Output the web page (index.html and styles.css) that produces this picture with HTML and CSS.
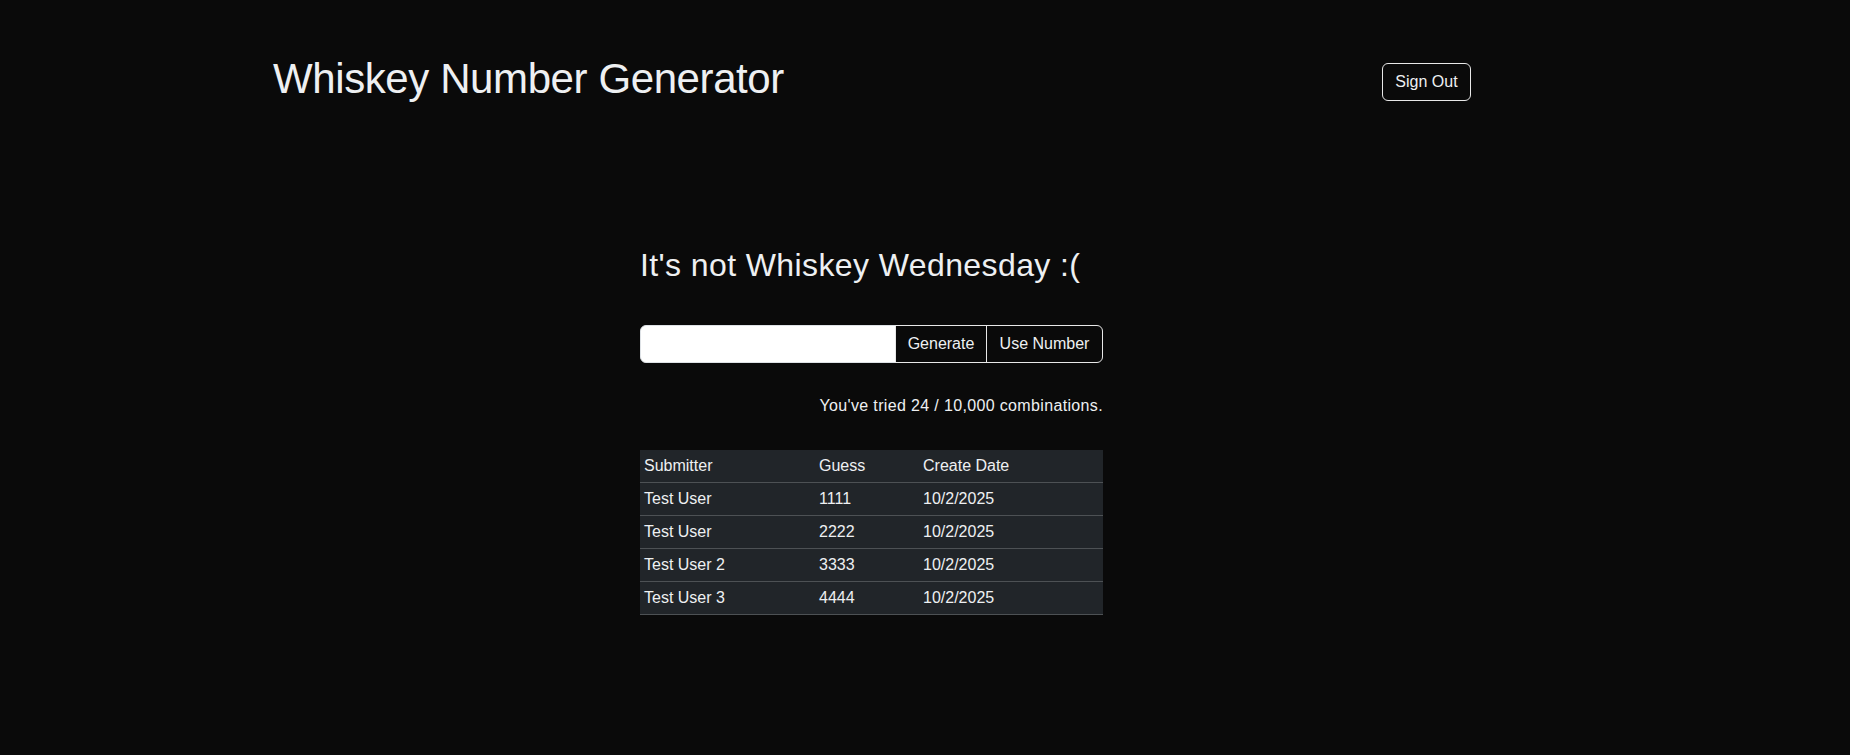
FILE: index.html
```html
<!DOCTYPE html>
<html lang="en">
<head>
<meta charset="utf-8">
<title>Whiskey Number Generator</title>
<link rel="stylesheet" href="styles.css">
</head>
<body>
<header class="topbar">
  <h1 class="title">Whiskey Number Generator</h1>
  <button class="btn btn-outline">Sign Out</button>
</header>
<main class="content">
  <h2 class="status">It's not Whiskey Wednesday :(</h2>
  <div class="input-group">
    <input class="number-input" type="text" aria-label="Number">
    <button class="btn btn-group-item btn-gen">Generate</button>
    <button class="btn btn-group-item btn-last">Use Number</button>
  </div>
  <p class="tries">You've tried 24 / 10,000 combinations.</p>
  <table class="guesses">
    <thead>
      <tr><th class="col-sub">Submitter</th><th class="col-guess">Guess</th><th class="col-date">Create Date</th></tr>
    </thead>
    <tbody>
      <tr><td>Test User</td><td>1111</td><td>10/2/2025</td></tr>
      <tr><td>Test User</td><td>2222</td><td>10/2/2025</td></tr>
      <tr><td>Test User 2</td><td>3333</td><td>10/2/2025</td></tr>
      <tr><td>Test User 3</td><td>4444</td><td>10/2/2025</td></tr>
    </tbody>
  </table>
</main>
</body>
</html>
```
FILE: styles.css
```css
* { box-sizing: border-box; }
html, body { margin: 0; padding: 0; }
body {
  background: #0a0a0a;
  color: #eef0f2;
  font-family: "Liberation Sans", Arial, sans-serif;
  font-size: 16px;
  line-height: 1.5;
  min-height: 755px;
}
.topbar {
  display: flex;
  align-items: flex-start;
  justify-content: space-between;
  width: 1198px;
  margin-left: 273px;
  padding-top: 54px;
}
.title {
  margin: 0;
  font-size: 42px;
  font-weight: 400;
  line-height: 1.2;
  letter-spacing: -0.4px;
}
.btn {
  font-family: inherit;
  font-size: 16px;
  line-height: 1.5;
  color: #eef0f2;
  background: transparent;
  border: 1px solid #e8e8e8;
  border-radius: 6px;
  padding: 0;
  cursor: pointer;
}
.btn-outline {
  margin-top: 9px;
  height: 38px;
  width: 89px;
}
.content {
  width: 463px;
  margin-left: 640px;
  padding-top: 141.5px;
}
.status {
  margin: 0;
  font-size: 32px;
  font-weight: 400;
  line-height: 1.2;
  letter-spacing: 0.4px;
}
.input-group {
  display: flex;
  margin-top: 40.5px;
  height: 38px;
}
.number-input {
  width: 256px;
  border: 1px solid #dee2e6;
  border-radius: 6px 0 0 6px;
  background: #fff;
  font-family: inherit;
  font-size: 16px;
  padding: 6px 12px;
}
.btn-group-item {
  border-radius: 0;
  height: 38px;
  margin-left: -1px;
}
.btn-gen { width: 92px; }
.btn-last {
  width: 117px;
  border-radius: 0 6px 6px 0;
}
.tries {
  margin: 31.5px 0 0;
  text-align: right;
  font-size: 16px;
  line-height: 24px;
  letter-spacing: 0.35px;
}
.guesses {
  margin-top: 31.3px;
  width: 463px;
  border-collapse: collapse;
  background: #212529;
  color: #eef0f2;
  font-size: 16px;
  line-height: 24px;
}
.guesses th, .guesses td {
  text-align: left;
  font-weight: 400;
  padding: 4px;
  border-bottom: 1px solid #4d5154;
}
.col-sub { width: 175px; }
.col-guess { width: 104px; }
```
